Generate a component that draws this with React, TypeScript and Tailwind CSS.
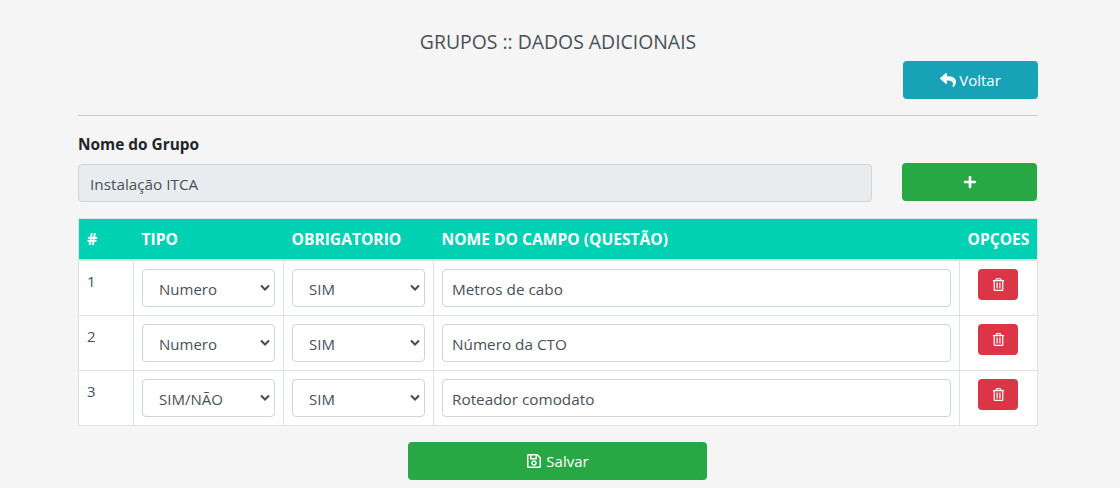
import { FaReply, FaPlus, FaRegTrashAlt, FaRegSave } from "react-icons/fa";

const font = "[font-family:'Open_Sans',sans-serif]";
const selectCls =
  "h-[38px] w-full appearance-none rounded-[4px] border border-[#ced4da] bg-white pl-4 pt-[2px] text-[15px] text-[#495057] outline-none";

function Select({ value }: { value: string }) {
  return (
    <div className="relative">
      <select className={selectCls} defaultValue={value}>
        <option>{value}</option>
      </select>
      <svg className="pointer-events-none absolute right-[3px] top-[13px]" width="14" height="12" viewBox="0 0 14 12">
        <path d="M3 3.5 L7 7.5 L11 3.5" fill="none" stroke="#444b52" strokeWidth="2" />
      </svg>
    </div>
  );
}

const rows = [
  { n: 1, tipo: "Numero", obr: "SIM", nome: "Metros de cabo" },
  { n: 2, tipo: "Numero", obr: "SIM", nome: "Número da CTO" },
  { n: 3, tipo: "SIM/NÃO", obr: "SIM", nome: "Roteador comodato" },
];

export default function App() {
  return (
    <div className={`min-h-[488px] bg-[#f5f5f5] ${font} text-[15px] text-[#212529]`}>
      <div className="ml-[78px] flex w-[960px] flex-col pt-[31px]">
        <h1 className="h-[22px] text-center text-[19.4px] leading-[22px] text-[#495057]">GRUPOS :: DADOS ADICIONAIS</h1>
        <div className="mt-[8px] flex justify-end">
          <button className="flex h-[38px] w-[135px] items-center justify-center gap-[3px] rounded-[4px] bg-[#17a2b8] text-[15px] text-white">
            <FaReply size={16} />
            Voltar
          </button>
        </div>
        <hr className="mt-[16px] border-t border-[#c9c9cb]" />
        <div className="mt-[19px] text-[15.4px] font-bold leading-[20px] text-[#212529]">Nome do Grupo</div>
        <div className="mt-[8px] flex items-start justify-between pr-px">
          <div className="mt-px flex h-[38px] w-[794px] items-center rounded-[4px] border border-[#ced4da] bg-[#e9ecef] pl-[11px] pt-[2px] text-[15.3px] text-[#495057]">
            Instalação ITCA
          </div>
          <button className="flex h-[38px] w-[135px] items-center justify-center rounded-[4px] bg-[#28a745] text-white">
            <FaPlus size={14} />
          </button>
        </div>
        <table className="mt-[16px] w-[959px] table-fixed border-collapse border border-[#dee2e6] bg-white">
          <colgroup>
            <col className="w-[55px]" />
            <col className="w-[150px]" />
            <col className="w-[150px]" />
            <col className="w-[526px]" />
            <col className="w-[78px]" />
          </colgroup>
          <thead>
            <tr className="h-[41px] border-b-2 border-[#dee2e6] bg-[#00d1b2] text-left text-[15.6px] font-bold text-white">
              <th className="pl-[8px] pt-[2px]">#</th>
              <th className="pl-[8px] pt-[2px]">TIPO</th>
              <th className="pl-[8px] pt-[2px]">OBRIGATORIO</th>
              <th className="pl-[8px] pt-[2px]">NOME DO CAMPO (QUESTÃO)</th>
              <th className="pl-[8px] pt-[2px]">OPÇOES</th>
            </tr>
          </thead>
          <tbody>
            {rows.map((r) => {
              const cellTop = r.n === 1 ? "pt-[8.5px]" : "pt-[8px]";
              return (
                <tr key={r.n} className={r.n === 1 ? "h-[56px] border-t border-[#dee2e6]" : "h-[55px] border-t border-[#dee2e6]"}>
                  <td className="border-r border-[#dee2e6] px-[8px] pt-[9px] align-top leading-[22px] text-[#495057]">{r.n}</td>
                  <td className={`border-r border-[#dee2e6] px-[8px] ${cellTop} align-top`}>
                    <Select value={r.tipo} />
                  </td>
                  <td className={`border-r border-[#dee2e6] px-[8px] ${cellTop} align-top`}>
                    <Select value={r.obr} />
                  </td>
                  <td className={`border-r border-[#dee2e6] px-[8px] ${cellTop} align-top`}>
                    <div className="flex h-[38px] items-center rounded-[4px] border border-[#ced4da] bg-white pl-[9px] pt-[2px] text-[15.3px] text-[#495057]">
                      {r.nome}
                    </div>
                  </td>
                  <td className={`${cellTop} pl-[18px] align-top`}>
                    <button className="flex h-[31px] w-[40px] items-center justify-center rounded-[4px] bg-[#dc3545] text-white">
                      <FaRegTrashAlt size={13} />
                    </button>
                  </td>
                </tr>
              );
            })}
          </tbody>
        </table>
        <div className="mt-[16px] flex justify-center pr-px">
          <button className="flex h-[38px] w-[299px] items-center justify-center gap-[4px] rounded-[4px] bg-[#28a745] text-[15px] text-white">
            <FaRegSave size={16} />
            Salvar
          </button>
        </div>
      </div>
    </div>
  );
}
